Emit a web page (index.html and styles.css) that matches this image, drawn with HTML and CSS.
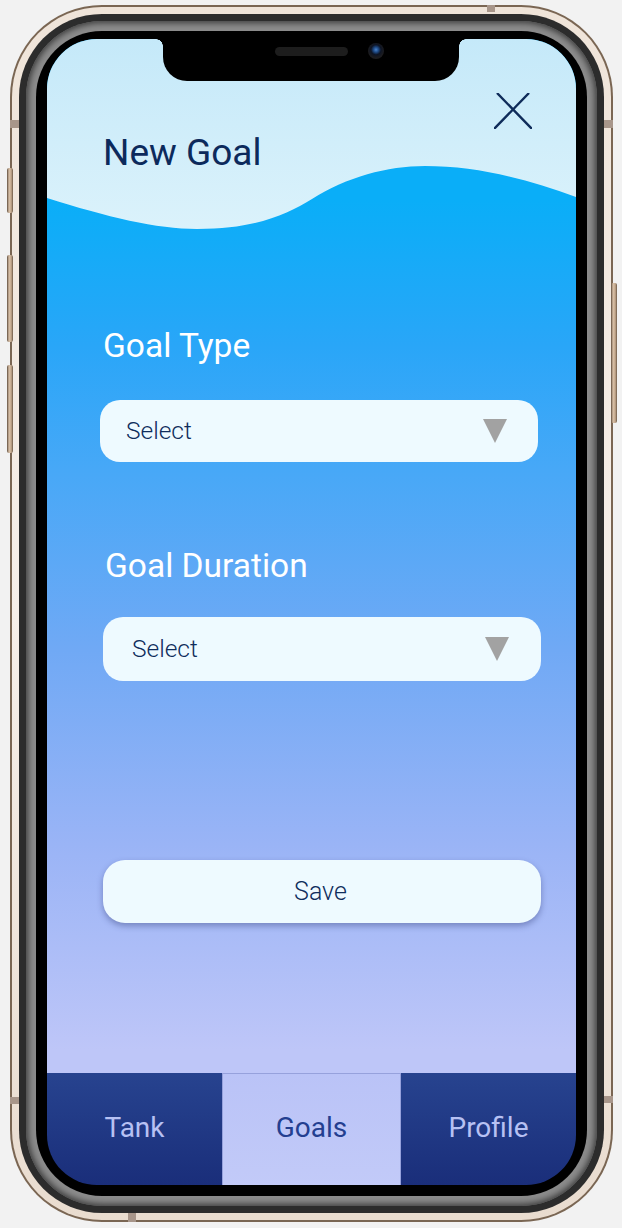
FILE: index.html
```html
<!DOCTYPE html>
<html lang="en">
<head>
<meta charset="utf-8">
<title>New Goal</title>
<link rel="stylesheet" href="styles.css">
</head>
<body>
<div class="phone">
  <span class="side-btn btn-mute"></span>
  <span class="side-btn btn-vol-up"></span>
  <span class="side-btn btn-vol-down"></span>
  <span class="side-btn btn-power"></span>
  <span class="antenna ant-top"></span>
  <span class="antenna ant-left-top"></span>
  <span class="antenna ant-right-top"></span>
  <span class="antenna ant-left-bottom"></span>
  <span class="antenna ant-right-bottom"></span>
  <span class="antenna ant-bottom"></span>
  <div class="rim">
    <div class="bezel">
      <div class="bezel-grad">
        <div class="glass">
          <div class="screen">
            <div class="notch"><span class="speaker"></span><span class="camera"></span></div>
            <main class="main">
              <svg class="wave" width="529" height="200" viewBox="0 0 529 200" aria-hidden="true">
                <defs>
                  <linearGradient id="sky" x1="0" y1="0" x2="0" y2="1">
                    <stop offset="0" stop-color="#c5e9f9"/>
                    <stop offset="1" stop-color="#dbf2fb"/>
                  </linearGradient>
                </defs>
                <path d="M0,0 H529 V158 C480,140 430,127 378,127 C340,127 300,138 265,160 C240,175 210,190 150,190 C110,190 60,178 0,159 Z" fill="url(#sky)"/>
              </svg>
              <header class="header">
                <h1 class="title">New Goal</h1>
                <button class="close" aria-label="Close">
                  <svg width="38" height="36" viewBox="0 0 38 36"><path d="M3,0 L38,36 M35,0 L0,36" stroke="#0f2c5a" stroke-width="2.4" fill="none"/></svg>
                </button>
              </header>
              <section class="form">
                <div class="field-label label-type">Goal Type</div>
                <div class="select select-type"><span class="select-text">Select</span><span class="caret"></span></div>
                <div class="field-label label-duration">Goal Duration</div>
                <div class="select select-duration"><span class="select-text">Select</span><span class="caret"></span></div>
                <button class="save">Save</button>
              </section>
            </main>
            <nav class="tabs">
              <div class="tab">Tank</div>
              <div class="tab tab-active">Goals</div>
              <div class="tab">Profile</div>
            </nav>
          </div>
        </div>
      </div>
    </div>
  </div>
</div>
</body>
</html>
```
FILE: styles.css
```css
* { box-sizing: border-box; }
html, body { margin: 0; }
body {
  background: #f2f2f2;
  padding: 5px 0 0 10px;
  font-family: Roboto, "Liberation Sans", sans-serif;
  width: 622px;
  height: 1228px;
  overflow: hidden;
}
.phone {
  position: relative;
  width: 603px;
  height: 1217px;
  border-radius: 92px;
  background: #7a6653;
  padding: 2px;
}
.rim {
  height: 100%;
  border-radius: 90px;
  background: linear-gradient(180deg, #efe4d9 0%, #f6efe9 50%, #e9dccf 100%);
  padding: 7px;
}
.bezel {
  height: 100%;
  border-radius: 83px;
  background: #2c2c2c;
  padding: 7px;
}
.bezel-grad {
  height: 100%;
  border-radius: 76px;
  background: #8c8c8c;
  box-shadow: inset 0 0 6px 2px #3a3a3a;
  padding: 10px;
}
.glass {
  height: 100%;
  border-radius: 66px;
  background: #000;
  padding: 8px 11px 11px 11px;
}
.screen {
  position: relative;
  height: 1146px;
  border-radius: 50px;
  overflow: hidden;
  display: flex;
  flex-direction: column;
}
.notch {
  position: absolute;
  top: 0;
  left: 116px;
  width: 296px;
  height: 42px;
  background: #000;
  border-radius: 0 0 24px 24px;
  z-index: 5;
  display: flex;
  align-items: flex-start;
  padding: 4px 0 0 112px;
  gap: 20px;
}
.notch::before, .notch::after {
  content: "";
  position: absolute;
  top: 0;
  width: 7px;
  height: 7px;
}
.notch::before {
  left: -7px;
  background: radial-gradient(circle at 0 100%, transparent 6.5px, #000 7px);
}
.notch::after {
  right: -7px;
  background: radial-gradient(circle at 100% 100%, transparent 6.5px, #000 7px);
}
.speaker {
  width: 73px;
  height: 9px;
  margin-top: 4px;
  border-radius: 5px;
  background: #1d1d1d;
}
.camera {
  width: 16px;
  height: 16px;
  border-radius: 50%;
  background: radial-gradient(circle at 50% 42%, #4a82c8 0, #1e4a86 2.5px, #0d1424 5px, #1c1c1f 8px);
}
.main {
  position: relative;
  height: 1034px;
  flex: none;
  background: linear-gradient(180deg,
    #0aaef8 0%, #0aaef8 15.6%, #29a6f8 29.6%, #47a8f7 41.7%,
    #70a9f5 59.1%, #9ab4f6 78%, #bec6f8 97.8%, #bec6f8 100%);
}
.wave {
  position: absolute;
  top: 0;
  left: 0;
  display: block;
}
.header {
  position: relative;
  display: flex;
  justify-content: space-between;
  align-items: flex-start;
  padding: 54px 44px 0 56px;
}
.title {
  margin: 38px 0 0 0;
  font-size: 37px;
  line-height: 44px;
  font-weight: 400;
  color: #0c2a5c;
}
.close {
  border: 0;
  padding: 0;
  background: transparent;
  width: 38px;
  height: 36px;
  display: block;
}
.close svg { display: block; }
.form {
  position: relative;
  display: flex;
  flex-direction: column;
  align-items: flex-start;
}
.field-label {
  font-size: 33.5px;
  line-height: 36px;
  color: #ffffff;
}
.label-type { margin: 153px 0 0 56px; }
.label-duration { margin: 86px 0 0 58px; }
.select {
  width: 438px;
  display: flex;
  align-items: center;
  justify-content: space-between;
  background: #eefaff;
  border-radius: 20px;
}
.select-type {
  height: 62px;
  margin: 36px 0 0 53px;
  padding: 0 31px 0 26px;
}
.select-duration {
  height: 64px;
  margin: 33px 0 0 56px;
  padding: 0 32px 0 29px;
}
.select-text {
  font-size: 24.5px;
  line-height: 28px;
  font-weight: 300;
  color: #0f2d5c;
}
.caret {
  width: 0;
  height: 0;
  border-left: 12px solid transparent;
  border-right: 12px solid transparent;
  border-top: 24px solid #a2a2a2;
}
.save {
  margin: 179px 0 0 56px;
  width: 438px;
  height: 63px;
  border: 0;
  border-radius: 22px;
  background: #eefaff;
  box-shadow: 0 3px 6px rgba(40, 50, 110, 0.4);
  font-family: Roboto, "Liberation Sans", sans-serif;
  font-size: 25px;
  font-weight: 300;
  color: #0f2d5c;
  padding: 0 3px 0 0;
}
.tabs {
  flex: 1;
  display: grid;
  grid-template-columns: 175px 179px 1fr;
}
.tab {
  display: flex;
  align-items: center;
  justify-content: center;
  padding-bottom: 4px;
  font-size: 28px;
  color: #b7c1f3;
  background: linear-gradient(180deg, #27438f 0%, #1a2e7a 100%);
}
.tab-active {
  color: #243f90;
  background: linear-gradient(180deg, #bac3f7 0%, #c2caf8 100%);
  border: 1px solid #96a1dc;
  border-bottom: 0;
}
.side-btn {
  position: absolute;
  width: 6px;
  border-radius: 2px;
  background: linear-gradient(90deg, #5e4c3c 0%, #d9c1a8 35%, #c3a88d 70%, #6b5846 100%);
}
.btn-mute { left: -3px; top: 163px; height: 45px; }
.btn-vol-up { left: -3px; top: 250px; height: 87px; }
.btn-vol-down { left: -3px; top: 360px; height: 88px; }
.btn-power { right: -4px; top: 278px; height: 140px; }
.antenna {
  position: absolute;
  background: #a8968a;
  z-index: 2;
}
.ant-top { left: 477px; top: 0; width: 8px; height: 7px; }
.ant-left-top { left: 0; top: 115px; width: 9px; height: 8px; }
.ant-right-top { right: 0; top: 115px; width: 9px; height: 8px; }
.ant-left-bottom { left: 0; top: 1092px; width: 9px; height: 7px; }
.ant-right-bottom { right: 0; top: 1091px; width: 9px; height: 7px; }
.ant-bottom { left: 118px; bottom: 0; width: 8px; height: 9px; }
```
